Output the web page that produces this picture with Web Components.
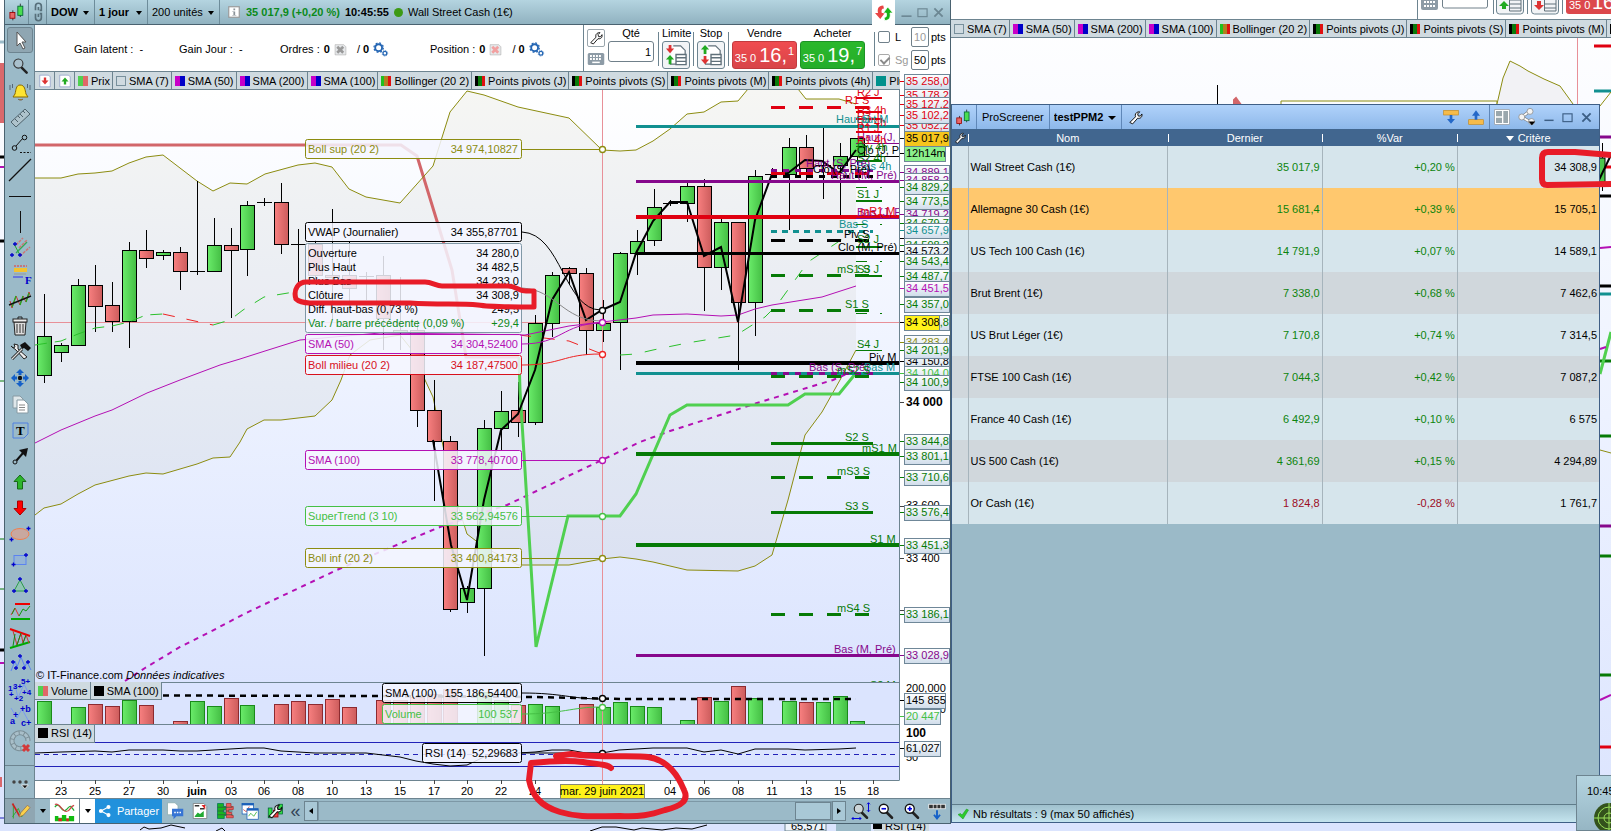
<!DOCTYPE html>
<html lang="fr">
<head>
<meta charset="utf-8">
<title>DOW 1 jour - ProScreener</title>
<style>
html,body{margin:0;height:100%}
body{font:11px/14px "Liberation Sans",Arial,sans-serif;color:#000;background:#dfe6ff;overflow:hidden}
</style>
</head>
<body>
<trading-desktop></trading-desktop>
<script>
const base='*{box-sizing:border-box}button,input,select{font:inherit;color:inherit;margin:0;padding:0;border:0;background:none;border-radius:0}button{display:inline-flex;align-items:center;justify-content:center}';
function define(name,render){
  customElements.define(name,class extends HTMLElement{
    constructor(){super();this.attachShadow({mode:'open'});}
    connectedCallback(){this.shadowRoot.innerHTML=render(this);}
  });
}
const plus=(x,y)=>`<path d="M${x-2} ${y}h4M${x} ${y-2}v4" stroke="#00c" stroke-width="1.3"/>`;
const wrench='<path d="M4 19l8-8c-1-3 0-6 4-7l2 0-3 3 1 3 3 0 2-3c1 4-2 7-6 6l-7 8z" fill="#fff" stroke="#111" stroke-width="1.4" stroke-linejoin="round"/>';
const lens='<path d="M13 14l7 7" stroke="#222" stroke-width="3.4" stroke-linecap="round"/><circle cx="9" cy="9" r="6"';
const ICONS={
candles:'<path d="M7 10v12M16 2v16" stroke="#222"/><rect x="3.5" y="12.5" width="6" height="7" fill="#e86868" stroke="#900"/><rect x="13" y="5" width="6" height="11" fill="#4ade50" stroke="#063"/>',
chain:'<g fill="none" stroke="#566f7a" stroke-width="2"><path d="M9 10V5a3.5 3.5 0 0 1 7 0v5h-2M9 14v5a3.5 3.5 0 0 0 7 0v-5h-2M12.5 6v4M12.5 14v4"/></g>',
info:'<rect x="3" y="3" width="18" height="18" fill="#fff" stroke="#999" stroke-width="2"/><path d="M11 6h3v3h-3zM9 11h5v6h2v1H9v-1h2v-5H9z" fill="#8a9298"/>',
cursor:'<path d="M9 4v14l3-3 3 6 2-1-3-6h4z" fill="#fff" stroke="#555"/>',
search:'<path d="M14 14l6 6" stroke="#222" stroke-width="3" stroke-linecap="round"/><circle cx="10" cy="9" r="5.5" fill="#a9c0cc" stroke="#333" stroke-width="1.3"/>',
bell:'<path d="M12 5c-4 0-4 5-5 9l-2 3h15l-2-3c-1-4-1-9-6-9z" fill="#fde432" stroke="#8a6a00"/><path d="M10 19a3 2.5 0 0 0 5 0" fill="#b88a00" stroke="#765"/><path d="M2 5v5M4.5 4v4M22 5v5M19.5 4v4" stroke="#567"/>',
ruler:'<path d="M3 16L17 3l5 5L8 21z" fill="#aec3cc" stroke="#4e626c"/><path d="M7 13l3 3M10 10l2 2M12 8l3 3M15 5l2 2" stroke="#4e626c"/>',
segment:'<path d="M8 14l7-8" stroke="#111"/><circle cx="6.5" cy="16" r="2.3" fill="none" stroke="#111"/><circle cx="16.5" cy="5.5" r="2.3" fill="none" stroke="#111"/><path d="M12 20.5h11" stroke="#111" stroke-dasharray="2 1.5"/>',
line:'<path d="M1 23L23 1" stroke="#111" stroke-width="1.2"/>',
hline:'<path d="M1 12.5h22" stroke="#111"/>',vline:'<path d="M12.5 1v22" stroke="#111"/>',
fork:'<g fill="none"><path d="M6 8L12 19" stroke="#2a2"/><path d="M8 17L19 6" stroke="#3a5" stroke-width="1.5"/><path d="M8 9l7-7M11 12l8-8M12 20L22 11" stroke="#c77" stroke-width="1.5" stroke-dasharray="3 1"/></g>'+plus(7,8)+plus(4,19)+plus(12,19),
fib:'<path d="M6 4h13" stroke="#e33" stroke-dasharray="2 1"/><path d="M6 7h13M6 9h13" stroke="#f2c230" stroke-width="2"/><path d="M6 12h12" stroke="#999"/><path d="M5 15h10" stroke="#33e"/><text x="17" y="22" font-family="Liberation Serif,serif" font-weight="700" font-size="11" fill="#00c">F</text>',
wave:'<path d="M2 13l2 7 4-12 4 9 3-9 3 6 3-10 1 3" fill="none" stroke="#c33"/><path d="M4 19l4-11M12 17l3-9M18 14l3-9" stroke="#2a2" stroke-width="1.3"/><path d="M1 17L23 8" stroke="#111" stroke-width="1.5"/>',
trash:'<path d="M6 8h12l-1 13H7z" fill="#ddd" stroke="#222"/><path d="M9 10v9M12 10v9M15 10v9" stroke="#333"/><rect x="5" y="5" width="14" height="3" fill="#eee" stroke="#222"/><path d="M10 5V3h4v2" fill="none" stroke="#222"/>',
tools:'<path d="M3 6l5 4 8 9 3-2-9-8 0-4-4-1 1 3-2 1z" fill="#eee" stroke="#222"/><path d="M4 19L14 9" stroke="#222" stroke-width="3"/><path d="M4 19L14 9" stroke="#ddd" stroke-width="1.3"/><path d="M12 5l5-3 6 6-3 3-4-3-2 1z" fill="#111"/>',
move:'<g fill="#1560c8"><path d="M12 3l4 4h-2.5v2h-3V7H8zM12 21l4-4h-2.5v-2h-3v2H8zM3 12l4-4v2.5h2v3H7V16zM21 12l-4-4v2.5h-2v3h2V16z"/></g><circle cx="12" cy="12" r="2.2" fill="#111"/>',
copy:'<g fill="#dfe7ea" stroke="#879aa3"><path d="M5 4h7l3 3v9H5z"/><path d="M9 8h7l4 4v9H9z" fill="#fff"/></g><path d="M11 13h6M11 15.5h6M11 18h6" stroke="#888"/>',
text:'<path d="M5 5h15v11l-4 4H5z" fill="none" stroke="#5080e0"/><text x="8" y="17" font-family="Liberation Serif,serif" font-weight="700" font-size="13">T</text>',
arrow:'<circle cx="7" cy="18" r="2" fill="none" stroke="#111"/><path d="M8.5 16.5L15 9" stroke="#111" stroke-width="2"/><path d="M11 6l9-2-2 9z" fill="#111"/>',
up:'<path d="M12 5l6 6.5h-3.500V19h-5v-7.500H6z" fill="#2db52d" stroke="#176a17"/>',
down:'<path d="M12 19l6-6.500h-3.500V5h-5v7.500H6z" fill="#f00" stroke="#a00"/>',
ellipse:'<ellipse cx="12" cy="12" rx="9" ry="5.5" fill="#c8a8a0" stroke="#f08050"/>'+plus(20.5,6.5)+plus(3.5,17.5),
rect:'<rect x="6" y="7.5" width="12" height="9" fill="#94b4d6" stroke="#5b83f0"/>'+plus(18,7)+plus(5.5,16.5),
tri:'<path d="M12 6l6 11H6z" fill="#8fc5b4" stroke="#2a9a4a"/>'+plus(12,5)+plus(6,17)+plus(18,17),
ch1:'<path d="M7 4h15" stroke="#e00" stroke-width="2"/><path d="M3 19h19" stroke="#0a0" stroke-width="2"/><path d="M3 15l4-7 4 8" fill="none" stroke="#d33"/><path d="M4 14l3-6M11 16l4-7 3 2 4-5" fill="none" stroke="#191"/>',
ch2:'<path d="M2 3l20 7" stroke="#e00" stroke-width="2"/><path d="M2 22l20-6" stroke="#0a0" stroke-width="2"/><path d="M5 5l4 14 4-12 2 10 3-8 3 8" fill="none" stroke="#c33"/><path d="M5 20l2-12M9 19l4-12M15 17l3-8" stroke="#181"/>',
zigzag:'<path d="M3 19l4-10 2 6 4-10 4 10 2-5 4 8" fill="none" stroke="#5b83f0"/>'+plus(5,10)+plus(8,16)+plus(12,4)+plus(16,16)+plus(20,10),
elliott:'<path d="M2 18l5-11 3 13L16 6l4 8" fill="none" stroke="#7a9af0"/><g font-size="8" font-weight="700" fill="#00c"><text x="0" y="13">1</text><text x="5" y="11">3+</text><text x="13" y="6">5+</text><text x="1" y="19">+</text><text x="6" y="23">+2</text><text x="14" y="17">+4</text></g>',
abc:'<path d="M3 4l6 10L14 5l7 13" fill="none" stroke="#7a9af0"/><g font-size="9" font-weight="700" fill="#00c"><text x="2" y="20">a</text><text x="5" y="14">+</text><text x="12" y="8">+b</text><text x="13" y="22">c+</text></g>',
circle:'<path d="M17 17a8 8 0 1 1 3-6" fill="none" stroke="#7b8f98" stroke-width="5"/><path d="M17 17a8 8 0 1 1 3-6" fill="none" stroke="#a9bfc9" stroke-width="3" stroke-dasharray="4 1"/><path d="M15 15l6 6M21 15l-6 6" stroke="#d43a3a" stroke-width="3"/>',
dots:'<circle cx="4" cy="8" r="2.3" fill="#444"/><circle cx="12" cy="8" r="2.3" fill="#444"/><circle cx="20" cy="8" r="2.3" fill="#444"/><path d="M14 12h9l-4.500 5z" fill="#111" stroke="#fff"/>',
wrench,
keyboard:'<rect x="1" y="4" width="22" height="16" rx="2" fill="#8d9ba6"/><path d="M4 8h16M4 12h16" stroke="#fff" stroke-width="2.5" stroke-dasharray="2.5 1.5"/><path d="M7 16.5h10" stroke="#fff" stroke-width="2"/>',
cross:'<path d="M2 3h16l4 4v15H2z" fill="#e6e8ea" stroke="#aaa"/><path d="M6 7l11 11M17 7L6 18" stroke="currentColor" stroke-width="5"/>',
gears:'<circle cx="9" cy="9" r="5.5" fill="none" stroke="#2466b4" stroke-width="3"/><circle cx="9" cy="9" r="7.5" fill="none" stroke="#2466b4" stroke-width="2" stroke-dasharray="3 2.9"/><circle cx="19" cy="18" r="3" fill="none" stroke="#2466b4" stroke-width="2"/><circle cx="19" cy="18" r="4.5" fill="none" stroke="#2466b4" stroke-width="1" stroke-dasharray="2 1.5"/>',
limit:'<path d="M9 2h8l5 5v15H6v-6" fill="#fff" stroke="#60707a" stroke-width="1.3"/><path d="M12 11.5h11v11H12z" fill="#fff" stroke="#60707a" stroke-width="1.5"/><path d="M12 15h11M12 19h11" stroke="#60707a" stroke-width="1.5"/><path d="M4 1h3v4h3L5.500 10 1 5h3z" fill="#d33"/><path d="M4 22h3v-5h3l-4.500-5L1 17h3z" fill="#2a2"/>',
stop:'<path d="M9 2h8l5 5v15H6v-6" fill="#fff" stroke="#60707a" stroke-width="1.3"/><path d="M12 11.5h11v11H12z" fill="#fff" stroke="#60707a" stroke-width="1.5"/><path d="M12 15h11M12 19h11" stroke="#60707a" stroke-width="1.5"/><path d="M4 11h3V6h3L5.500 1 1 6h3z" fill="#2a2"/><path d="M4 13h3v4h3l-4.500 5L1 17h3z" fill="#d33"/>',
refresh:'<path d="M11 2C4 2 3 7 4 12H0l7 8 6-8H9c-1-4 0-6 3-6z" fill="#e84545"/><path d="M13 22c7 0 8-5 7-10h4l-7-8-6 8h4c1 4 0 6-3 6z" fill="#17b317" stroke="#fff"/>',
min:'<path d="M1 20h22" stroke="currentColor" stroke-width="3.5"/>',max:'<rect x="2" y="4" width="20" height="17" fill="none" stroke="currentColor" stroke-width="2.5"/>',close:'<path d="M3 3l18 18M21 3L3 21" stroke="currentColor" stroke-width="4"/>',
tab_down:'<path d="M3 2h15l3 3v17H3z" fill="#fff" stroke="#78b"/><path d="M10 6h4v5h4l-6 7-6-7h4z" fill="#d33"/>',
tab_up:'<path d="M3 2h15l3 3v17H3z" fill="#fff" stroke="#78b"/><path d="M10 18h4v-5h4l-6-7-6 7h4z" fill="#2a2"/>',
pencil:'<path d="M4 4v17M3 19l7-10 4 10 6-8" stroke="#2a2" fill="none"/><path d="M3 3l9 16" stroke="#c22" stroke-width="2"/><path d="M21 5l-8 9-2 5 5-2 8-9z" fill="#fbd04a" stroke="#975"/>',
indic:'<path d="M1 7c5-8 8 8 13 3s4-6 9 1" fill="none" stroke="#2a3" stroke-width="1.4"/><path d="M1 4c5-3 8 8 13 8s4-6 9-7" fill="none" stroke="#c44" stroke-width="1.4"/><path d="M1 23v-6h4v2h4v-3h5v4h3v-3h6v6z" fill="#1b1"/><path d="M5 23v-3h4v3M14 23v-3h3v3" fill="#d22"/>',
share:'<g fill="currentColor"><circle cx="5" cy="12" r="3.5"/><circle cx="18" cy="5" r="3.5"/><circle cx="18" cy="19" r="3.5"/></g><path d="M18 5L5 12l13 7" fill="none" stroke="currentColor" stroke-width="1.8"/>',
chat:'<path d="M2 1h10l4 4v12H2z" fill="#fff" stroke="#8aa"/><path d="M8 9h15v10h-9l-4 4v-4H8z" fill="#3674d4"/><path d="M11 14h2M14.5 14h2M18 14h2" stroke="#fff" stroke-width="2"/>',
report:'<path d="M3 2h14l4 4v16H3z" fill="#fff" stroke="#777"/><path d="M5 5h6M12 9h6" stroke="#333" stroke-width="2"/><path d="M14 4h5v6z" fill="#d22"/><path d="M5 19l4-5 3 2 5-4v8H5z" fill="#2a3"/>',
book:'<path d="M2 2h8v4h3v4h-3v4h3v4h-2v4H2z" fill="#19b51f" stroke="#075"/><path d="M14 2h6v4h3v4h-6v4h4v4h2v3h-9z" fill="#f05a5a" stroke="#a33"/><path d="M2 7h20M2 12h20M2 17h20" stroke="#354"/>',
windows:'<rect x="1.5" y="2" width="15" height="14" fill="#fff" stroke="#1a60b8"/><path d="M1 3h16" stroke="#1a60b8" stroke-width="3"/><path d="M3 10l4 3 4-7" stroke="#c33" fill="none"/><rect x="8" y="9" width="15" height="14" fill="#fff" stroke="#1a60b8"/><path d="M8 10h15" stroke="#1a60b8" stroke-width="3"/><path d="M10 19l3-4 4 4 4-6" stroke="#2a2" fill="none"/>',
candletool:'<rect x="3" y="8" width="5" height="13" fill="#3d4" stroke="#063"/><rect x="17" y="3" width="5" height="13" fill="#3d4" stroke="#063"/><rect x="10" y="11" width="6" height="9" fill="#e44" stroke="#900"/>'+wrench,
zfit:lens+' fill="#ccd5d8" stroke="#222" stroke-width="1.5"/><path d="M22 1v12M20 3l2-2 2 2M20 11l2 2 2-2M0 22h12M2 20l-2 2 2 2M10 20l2 2-2 2" stroke="#00d" fill="none" stroke-width="1.3"/>',
zout:lens+' fill="#fff" stroke="#111" stroke-width="1.8"/><path d="M6 9h6" stroke="#00d" stroke-width="2.2"/>',
zin:lens+' fill="#fff" stroke="#111" stroke-width="1.8"/><path d="M6 9h6M9 6v6" stroke="#00d" stroke-width="2.2"/>',
dock:'<rect x="1" y="3" width="22" height="6" fill="#333" stroke="#fff"/><path d="M7 3v6M12 3v6M17 3v6" stroke="#fff"/><path d="M12 11v10M8 17l4 5 4-5" stroke="#1560c8" stroke-width="2.5" fill="none"/>',
odown:'<rect x="1" y="2" width="22" height="7" fill="#f6bb4a" stroke="#c58a20"/><path d="M10 9h4v6h4l-6 7-6-7h4z" fill="#2468c8"/>',
oup:'<rect x="1" y="16" width="22" height="7" fill="#f6bb4a" stroke="#c58a20"/><path d="M10 16h4v-6h4l-6-8-6 8h4z" fill="#2468c8"/>',
layout:'<rect x="1" y="1" width="22" height="22" fill="#fff" stroke="#999"/><path d="M3 3h9v8H3zM3 13h9v8H3zM14 3h7v18h-7z" fill="#9aa7ad"/>',
sharemenu:'<path d="M16 4L5 12l12 7" fill="none" stroke="#777" stroke-width="4"/><g fill="#f4f4f4" stroke="#888"><path d="M16 4L5 12l12 7" fill="none" stroke="#fff" stroke-width="2.5"/><circle cx="5" cy="12" r="4"/><circle cx="16" cy="4.5" r="4"/><circle cx="18" cy="18" r="4"/></g><path d="M14 18h9l-4.500 5z" fill="#000"/>',
check:'<path d="M2 13l5-2 3 3L19 2l4 2-11 18z" fill="#2ccc2c" stroke="#189018"/>',
};
customElements.define('app-icon',class extends HTMLElement{
  constructor(){super();this.attachShadow({mode:'open'});}
  connectedCallback(){
    const s=+this.getAttribute('size')||24;
    this.shadowRoot.innerHTML=`<style>:host{display:inline-block;width:${s}px;height:${s}px;flex:none}svg{display:block;overflow:visible;font-family:"Liberation Sans",Arial,sans-serif}</style><svg width="${s}" height="${s}" viewBox="0 0 24 24" aria-hidden="true">${ICONS[this.getAttribute('name')]||''}</svg>`;
  }
});

/* Coloured swatch and series name */
define('legend-chip',()=>`<style>${base}
:host{display:inline-flex;align-items:center;gap:3px;height:17px;padding:0 2px 0 3px;border-right:1px solid #6d8490;background:#cfdae0;white-space:nowrap;flex:none}
i{width:10px;height:10px;background:var(--swatch,transparent)}
:host([hollow]) i{border:1px solid #78909c}</style><i></i><slot></slot>`);
define('legend-strip',el=>{
  const mb='linear-gradient(90deg,#c800c8 50%,#0000c8 50%)',pp='linear-gradient(90deg,#000 33%,#0a7a0a 33% 66%,#e01010 66%)';
  const chips=[['Prix','linear-gradient(90deg,#50d050 50%,#e06868 50%)'],['SMA (7)',''],['SMA (50)',mb],['SMA (200)',mb],['SMA (100)',mb],['Bollinger (20 2)','linear-gradient(90deg,#20c020 33%,#b08020 33% 66%,#e01010 66%)'],['Points pivots (J)',pp],['Points pivots (S)',pp],['Points pivots (M)',pp],['Points pivots (4h)',pp],['Plus Haut','#00918c']];
  const from=+el.getAttribute('from')||0;
  return `<style>${base}:host{display:flex;overflow:hidden;border-top:1px solid #6d8490;border-bottom:1px solid #6d8490;background:#cfdae0}
  button{width:20px;border-right:1px solid #6d8490;flex:none}</style>${from?'':'<button aria-label="Réduire"><app-icon name="tab_down" size="14"></app-icon></button><button aria-label="Agrandir"><app-icon name="tab_up" size="14"></app-icon></button>'}`+
  chips.slice(from).map(c=>`<legend-chip ${c[1]?`style="--swatch:${c[1]}"`:'hollow'}>${c[0]}</legend-chip>`).join('');
});

define('tool-rail',()=>{
  const t='cursor search bell ruler segment line hline vline fork fib wave trash tools move copy text arrow up down ellipse rect tri ch1 ch2 zigzag elliott abc circle'.split(' ');
  return `<style>${base}:host{display:flex;flex-direction:column;align-items:center;width:30px;padding-top:2px;background:#9bbac8;border-right:1px solid #6d8490}
  button{width:26px;height:26px;border-radius:3px}button.on{background:#8fa6b2;border:1px solid #6d8490}
  .more{margin-top:10px;border-top:1px solid #6d8490;width:100%;flex:1;border-radius:0;padding-top:6px}</style>`+
  t.map((n,i)=>`<button class="${i?'':'on'}" aria-label="${n}"><app-icon name="${n}" size="${i===1?20:24}"></app-icon></button>`).join('')+
  '<button class="more" aria-label="more"><app-icon name="dots" size="18"></app-icon></button>';
});

define('title-bar',()=>`<style>${base}
:host{display:flex;height:25px;align-items:stretch;background:linear-gradient(#b4d4e0,#90b2c0);border-bottom:1px solid #4a6270;white-space:nowrap}
:host>:not(style){display:flex;align-items:center;flex:none}
.s{border-right:1px solid #6d8c9a;justify-content:center}
label{position:relative;padding-left:4px;border-right:1px solid #6d8c9a}
label::after{content:"";border:3px solid transparent;border-top:4px solid #000;border-bottom:0;position:absolute;right:5px;top:11px}
select{appearance:none;font-size:11px;width:100%;outline:0}
.g{color:#0b8a1a;font-weight:700;padding:0 5px}:host>.dot{width:9px;height:9px;border-radius:50%;background:#3d9a14;align-self:center;margin:0 5px}
:host>.r{margin-left:auto;background:#fff;width:23px;justify-content:center;height:25px}
.w{color:#6c8793;width:55px;gap:5px;padding-left:6px}</style>
<span class="s" style="width:24px"><app-icon name="candles" size="20"></app-icon></span>
<span class="s" style="width:18px"><app-icon name="chain" size="20"></app-icon></span>
<label style="width:48px"><select aria-label="Valeur" style="font-weight:700"><option>DOW</option></select></label>
<label style="width:53px"><select aria-label="Période" style="font-weight:700"><option>1 jour</option></select></label>
<label style="width:72px"><select aria-label="Unités"><option>200 unités</option></select></label>
<span style="padding-left:7px"><app-icon name="info" size="14"></app-icon></span>
<span class="g">35 017,9 (+0,20 %)</span><b>10:45:55</b><i class="dot"></i><span>Wall Street Cash (1€)</span>
<span class="r"><app-icon name="refresh" size="18"></app-icon></span>
<span class="w"><button aria-label="Réduire"><app-icon name="min" size="11"></app-icon></button><button aria-label="Agrandir"><app-icon name="max" size="11"></app-icon></button><button aria-label="Fermer"><app-icon name="close" size="11"></app-icon></button></span>`);

define('order-bar',()=>`<style>${base}
:host{display:flex;height:47px;background:#fff;align-items:stretch}
.pos{flex:1;display:flex;align-items:center;padding-left:39px;padding-top:1px;min-width:0}
.pos>span{display:flex;align-items:center;gap:4px;white-space:nowrap;flex:none}
.ticket{display:grid;grid-template-columns:21px 54px 35px 35px 68px 78px 72px;padding-left:3px;border-left:1px solid #6d8490;flex:none}
.ticket>div{display:flex;flex-direction:column;align-items:flex-start;position:relative}
.col{padding-top:1px}.col>span{line-height:14px;margin-bottom:1px;white-space:nowrap;text-align:center;min-width:100%}
.sep::before{content:"";position:absolute;left:-4px;top:7px;height:34px;border-left:1px solid #6d8490}
.first{padding-top:4px;gap:3px}.first button:first-child{border:1px solid #9aa6ad;border-radius:2px;width:18px;height:18px}
input[type=text]{border:1px solid #70808a;border-radius:3px;text-align:right;background:#fff}
.q{width:46px;height:21px;padding-right:2px}.c46>span{min-width:46px}.c28>span{min-width:28px}.c65>span{min-width:65px}
.b{width:28px;height:28px;border:1px solid #6d8490;border-radius:3px;background:#f2f4f6}
.p{width:65px;height:28px;border-radius:3px;color:#fff;display:flex;align-items:baseline;justify-content:center;font-size:11px;background:linear-gradient(#f04c50,#d84448);border:1px solid #c23b3f;padding:0;line-height:26px}
.p.buy{background:linear-gradient(#2bb82b,#24ad2b);border-color:#1d9226}
.p b{font-weight:400;font-size:20px;line-height:26px;margin-left:3px}.p sup{font-size:11px;align-self:flex-start;line-height:18px;margin-left:1px;vertical-align:baseline}
.ticket>.o{display:grid;grid-template-columns:31px 18px 1fr;column-gap:2px;align-items:center;padding:1px 0}
.o label{display:flex;align-items:center;gap:5px}.o input[type=text]{width:18px;height:20px;text-align:center;border-radius:2px}
.o input[type=checkbox]{appearance:none;width:12px;height:12px;border:1px solid #70808a;border-radius:2px;background:#fff;position:relative;flex:none}
.o input:checked{border-color:#aaa}.o input:checked::after{content:"";position:absolute;left:3px;top:0;width:4px;height:7px;border:solid #8a8a8a;border-width:0 2px 2px 0;transform:rotate(45deg)}
.dim{color:#999}</style>
<div class="pos"><span style="width:105px">Gain latent :&nbsp; -</span><span style="width:101px">Gain Jour :&nbsp; -</span>
<span style="width:150px">Ordres : <b>0</b><app-icon name="cross" size="13" style="color:#999"></app-icon><span>&nbsp; / <b>0</b></span><app-icon name="gears" size="15"></app-icon></span>
<span>Position : <b>0</b><app-icon name="cross" size="13" style="color:#f2a0a0"></app-icon><span>&nbsp; / <b>0</b></span><app-icon name="gears" size="15"></app-icon></span></div>
<div class="ticket"><div class="first"><button aria-label="Réglages"><app-icon name="wrench" size="16"></app-icon></button><button aria-label="Clavier"><app-icon name="keyboard" size="18"></app-icon></button></div>
<div class="col c46"><span>Qté</span><input class="q" type="text" aria-label="Quantité" value="1"></div>
<div class="col c28 sep"><span>Limite</span><button class="b" aria-label="Limite"><app-icon name="limit" size="22"></app-icon></button></div>
<div class="col c28 sep"><span>Stop</span><button class="b" aria-label="Stop"><app-icon name="stop" size="22"></app-icon></button></div>
<div class="col c65 sep"><span>Vendre</span><button class="p"><span>35 0</span><b>16,</b><sup>1</sup></button></div>
<div class="col c65"><span>Acheter</span><button class="p buy"><span>35 0</span><b>19,</b><sup>7</sup></button></div>
<div class="o sep"><label><input type="checkbox">L</label><input type="text" class="dim" value="10" aria-label="Limite pts"><span>pts</span>
<label class="dim"><input type="checkbox" checked>Sg</label><input type="text" value="50" aria-label="Stop pts"><span>pts</span></div></div>`);

/* Price, volume and RSI panes share one horizontal scale: bar i is centred on X(i) */
const X=i=>44.4+16.92*i;
const BARS=[[0,'g',336,375,294,383],[1,'g',345,352,343,362],[2,'g',285,345,279,346],[3,'r',285,306,265,332],[4,'r',305,321,282,332],[5,'g',250,321,242,348],[6,'r',250,258,230,268],[7,'g',252,255,250,260],[8,'r',252,271,247,290],[9,'g',271,271,181,275],[10,'g',245,271,218,271],[11,'r',245,250,228,318],[12,'g',205,249,201,276],[13,'g',202,202,198,206],[14,'r',202,244,183,254],[15,'g',244,244,229,285],[16,'r',244,275,240,280],[17,'r',275,277,209,320],[18,'r',275,288,242,310],[19,'g',276,276,272,300],[20,'r',275,318,256,350],[21,'g',330,332,277,350],[22,'r',330,410,320,427],[23,'r',410,441,380,501],[24,'r',441,609,436,612],[25,'g',588,602,586,613],[26,'g',428,588,420,656],[27,'g',411,428,391,450],[28,'r',410,422,382,437],[29,'g',323,422,315,425],[30,'g',275,323,272,337],[31,'r',268,273,267,285],[32,'r',273,330,268,355],[33,'g',323,330,300,342],[34,'g',253,322,252,370],[35,'g',241,253,230,275],[36,'g',207,240,189,246],[37,'g',203,203,200,206],[38,'g',186,203,183,222],[39,'r',186,267,179,311],[40,'g',222,267,219,290],[41,'r',222,302,222,370],[42,'g',176,302,170,336],[43,'g',174,174,168,178],[44,'g',147,174,138,230],[45,'r',147,168,135,180],[46,'g',165,165,128,199],[47,'g',156,165,143,215],[48,'g',138,156,138,165]];
const VOL={0:'g701',2:'g707',3:'r704',4:'r706',5:'g700',6:'r705',8:'r721',9:'g701',10:'g706',11:'r698',12:'g705',14:'r704',15:'r701',16:'r704',17:'r699',18:'r707',20:'r700',21:'r700',22:'r697',23:'r694',24:'r689',26:'g692',27:'g700',28:'r705',29:'g704',30:'g706',32:'r704',33:'g707',34:'g702',35:'g706',36:'g707',38:'g720',39:'r697',40:'g701',41:'r686',42:'g698',44:'g701',45:'r702',46:'g702',47:'g696',48:'g721'};
const up='35,178 61,178 78,174 95,173 112,171 129,163 146,157 163,155 180,168 197,181 213,191 230,183 247,184 265,174 298,165 315,163 332,167 349,189 366,197 400,203 433,166 450,112 467,91 484,95 518,107 569,118 602,150 620,151 636,150 653,141 670,129 687,114 704,112 721,102 738,101 748,89 798,89 806,99 839,99 856,104';
const lo='35,515 44,508 61,504 78,494 95,485 129,476 146,473 163,474 197,464 213,458 230,457 240,442 247,429 264,420 281,420 315,416 332,400 341,380 350,355 370,340 400,335 416,355 425,380 433,397 450,480 467,534 484,547 518,565 569,565 602,559 620,557 636,559 653,562 687,570 738,571 755,566 772,555 788,500 805,435 822,412 840,380 856,350';
const pl=(p,c,w=1,d='')=>`<polyline points="${p}" fill="none" stroke="${c}" stroke-width="${w}" ${d?`stroke-dasharray="${d}"`:''}/>`;
const hl=(x1,x2,y,c,w=3,d='')=>`<path d="M${x1} ${y}H${x2}" stroke="${c}" stroke-width="${w}" ${d?`stroke-dasharray="${d}"`:''}/>`;
const tx=(x,y,s,c='#000',a='start',o='')=>`<text x="${x}" y="${y}" fill="${c}" text-anchor="${a}" ${o}>${s}</text>`;
const tag=(x,y,w,h,l,r,c)=>`<rect x="${x}.5" y="${y}.5" width="${w}" height="${h}" rx="2" fill="#f4f6ff" fill-opacity=".85" stroke="${c}"/>`+tx(x+3,y+14,l,c)+tx(x+w-3,y+14,r,c,'end');
const G='#067a06',R='#e00010',P='#86088c',T='#119090',O='#8c8c10',M='#b410b4';
function pricePane(){
  let s='';
  s+=`<rect x="35" y="90" width="865" height="592" fill="url(#sky)"/><g clip-path="url(#pane)">`;
  s+=`<polygon points="${up} ${lo.split(' ').reverse().join(' ')}" fill="#888868" fill-opacity=".08"/>`;
  s+=pl('35,145 401,145 417,156 452,270 466,357 519,357','#d2666a',3);
  s+=pl(up,O)+pl(lo,O)+hl(35,899,322.5,'#e89098',1);
  for(const [i,c,a,b,h,l] of BARS){const x=Math.round(X(i));s+=`<path d="M${x}.5 ${h}V${l}" stroke="#000"/>`;
    s+=a===b?hl(x-7,x+8,a+.5,'#000',1):`<rect x="${x-7}.5" y="${a}.5" width="14" height="${b-a}" fill="url(#${c})" stroke="#000"/>`;}
  s+=pl('35,345 61,341 78,334 95,328 112,326 129,322 146,315 163,314','#2bc02b',1,'12 8')+pl('163,314 213,325','#e22',1,'12 12')+pl('213,325 230,320 243,310 264,297 300,291','#2bc02b',1,'12 12')+pl('519,335 569,341 602,354','#e22',1,'12 12')+pl('620,355 636,354 653,350 687,343 730,336 738,334 765,317 777,305 790,287 808,262 832,246 847,236','#2bc02b',1,'12 13');
  s+=pl('35,443 61,430 95,416 112,410 147,393 180,380 220,365 240,359 265,351 300,340 380,333 460,334 525,335 569,326 602,322 636,318 653,315 687,314 721,316 738,315 755,309 772,305 822,297 856,286',M);
  s+=pl('125,681 145,668 180,647 210,632 244,614 339,569 440,527 507,505 602,460 640,442 670,431 714,417 757,403 790,393 833,380 856,370',M,2,'5 5');
  s+=pl('519,357 520,390 536,647 568,516 620,516 636,494 670,415 687,405 788,405 805,394 839,394 856,373','#50d050',3);
  s+=pl('433,440 451,545 467,600 484,500 501,430 518,414 535,370 552,300 569,272 586,320 602,310 620,302 636,253 653,221 670,202 687,202 704,256 721,247 738,322 755,220 772,174 788,173 805,160 822,161 839,173 856,150','#000',2);
  for(const [y,c,w] of [[126.5,T,3],[181.5,P,3],[217,R,4],[253.5,'#000',3],[363,'#000',4],[373.5,T,3],[454,G,4],[545,G,4],[655.5,P,3]])s+=hl(636,899,y,c,w);
  for(const [y,c,d] of [[107.5,R,'14 14'],[170.5,P,'6 6'],[173.5,R,'14 14'],[176.5,'#000','6 6'],[231.5,T,'6 5'],[240.5,'#000','14 14'],[275.5,G,'14 14'],[310.5,G,'14 14'],[373.5,P,'6 6'],[376.5,G,'14 14'],[443.5,G,''],[477.5,G,'14 14'],[512.5,G,''],[614.5,G,'14 14']])s+=hl(771,873,y,c,3,d);
  for(const [y,c,w] of [[98,R,2],[112,R,2],[119,R,2],[132,R,2],[161,G,2],[201,G,2],[247,G,2],[276,G,2]])s+=hl(856,882,y,c,w);
  for(const y of [146.5,187.5,224.5,261.5,313.5])s+=hl(856,882,y,G,1,'11 13');
  s+=hl(856,882,350.5,G,1)+hl(856,899,143.5,P,1)+hl(856,899,156.5,'#000',1)+hl(856,899,218.5,P,1);
  const L=[[857,96,'R2 J',R],[845,104,'R1 S',R],[857,114,'R3 4h',R],[857,120,'R3 J',R],[857,126,'R2 4h',R],[836,123,'Haut S',T],[861,123,'aut M',T],[857,132,'R1 J',R],[857,141,'Haut (J, Pré)',P],[857,144,'R1 4h',R],[857,154,'Clo (J, Pré)','#000'],[857,151,'Piv 4h',G],[857,162,'S2 4h',G],[857,170,'Bas 4h',T],[806,167,'Haut (S, Pré)',P],[813,173,'Clo (S, Pré)','#000'],[831,179,'Haut (M, Pré)',P],[857,198,'S1 J',G],[857,216,'Bas (J, Pré)',P],[860,215,'mR1 M',R],[839,228,'Bas S',T],[844,238,'Piv S','#000'],[857,243,'S2 J',G],[838,251,'Clo (M, Pré)','#000'],[837,273,'mS1 S',G],[857,273,'S3 J',G],[845,308,'S1 S',G],[857,348,'S4 J',G],[869,361,'Piv M','#000'],[809,371,'Bas (S, Pré)',P],[864,371,'Bas M',T],[837,374,'mS2 S',G],[845,441,'S2 S',G],[862,452,'mS1 M',G],[837,475,'mS3 S',G],[845,510,'S3 S',G],[870,543,'S1 M',G],[837,612,'mS4 S',G],[834,653,'Bas (M, Pré)',P],[870,689,'S2 M',G]];
  s+=L.map(l=>tx(...l)).join('')+'</g>';
  s+=tx(36,679,'© IT-Finance.com')+tx(126,679,'Données indicatives','#000','start','font-style="italic"');
  return s;
}
function lowerPanes(){
  let s=`<rect x="35" y="682" width="865" height="98" fill="#dbe4fe"/>`;
  for(const i in VOL){const c=VOL[i][0],y=+VOL[i].slice(1),x=Math.round(X(+i));s+=`<rect x="${x-7}.5" y="${y}.5" width="14" height="${724-y}" fill="url(#${c})" stroke="${c==='g'?'#1a8a1a':'#8c2a30'}"/>`;}
  s+=pl('163,695.5 380,696 536,697 620,699 755,699 856,699','#000',2.5,'6 5');
  s+='<path d="M35 682.5H899M35 724.5H899M35 780.5H899" stroke="#6d8490"/>'+hl(35,899,742.5,'#2222b8',1)+hl(35,899,766.5,'#2222b8',1)+hl(35,899,754.5,'#2222b8',1,'5 4');
  s+=pl('35,753 61,752 95,751 112,752 129,750 163,750 180,751 197,751 230,749 247,748 264,748 281,751 315,753 366,753 400,757 416,761 433,764 450,766 467,765 484,757 501,754 535,752 552,750 569,750 586,753 602,753 619,750 653,748 687,748 704,752 721,750 738,754 755,749 788,749 805,750 839,749 856,748','#000');
  s+=`<rect x="35" y="781" width="915" height="17" fill="#fff"/>`;
  const d={1:'23',3:'25',5:'27',7:'30',9:'juin',11:'03',13:'06',15:'08',17:'10',19:'13',21:'15',23:'17',25:'20',27:'22',29:'24',37:'04',39:'06',41:'08',43:'11',45:'13',47:'15',49:'18'};
  for(const i in d)s+=`<path d="M${Math.round(X(+i))}.5 780v4" stroke="#444"/>`+tx(Math.round(X(+i)),795,d[i],'#000','middle',i==='9'?'font-weight="700"':'');
  return s;
}
function axis(){
  let s='<rect x="900" y="72" width="50" height="709" fill="#fff"/><path d="M899.5 72V780" stroke="#6d8490"/>';
  const box=(y,t,c,f='url(#lab)',w=45)=>`<path d="M900 ${y}.5h4" stroke="${c}"/><rect x="904.5" y="${y-7}.5" width="${w}" height="15" fill="${f}" stroke="#6f8798"/>`+tx(906,y+4,t,c);
  const back=[[95,'35 178,2',R],[104,'35 127,2',R],[125,'35 052,2',R],[172,'34 889,1',P],[180,'34 858,2',P],[214,'34 719,2',P],[223,'34 679,7',G],[238,'34 625,4','#000'],[230,'34 657,9',T],[245,'34 598,2',G],[251,'34 573,2','#000'],[322,'34 304,8',G],[342,'34 283,4',O],[361,'34 150,8','#000'],[373,'34 104,0','#45c045']];
  const front=[[81,'35 258,0',R],[115,'35 102,2',R],[187,'34 829,2',G],[201,'34 773,5',G],[261,'34 543,4',G],[276,'34 487,7',G],[288,'34 451,5',M],[304,'34 357,0',G],[350,'34 201,9',G],[382,'34 100,9',G],[441,'33 844,8',G],[456,'33 801,1',G],[477,'33 710,6',G],[512,'33 576,4',G],[545,'33 451,3',G],[614,'33 186,1',G],[655,'33 028,9',P]];
  s+=tx(906,509,'33 600')+tx(906,562,'33 400')+tx(906,406,'34 000','#000','start','font-weight="700" font-size="12"');
  for(const y of [402,506,558,610])s+=hl(900,904,y+.5,'#444',1);
  s+=back.map(b=>box(...b)).join('')+front.map(b=>box(...b)).join('');
  s+=box(138,'35 017,9','#000','#f6c51c')+box(153,'12h14m','#000','#8cf08c',41)+box(322,'34 308','#000','#fff21a',35);
  s+=tx(906,692,'200,000')+tx(906,713,'100,000')+tx(906,761,'50')+box(716,'20 447','#45c045','url(#lab)',36)+box(700,'145 855','#000','url(#lab)',41)+box(748,'61,027','#000','url(#lab)',36)+tx(906,737,'100','#000','start','font-weight="700" font-size="12"');
  return s;
}
function readouts(){
  const ring=(y,c)=>`<circle cx="602.5" cy="${y}.5" r="3" fill="#fff" stroke="${c}" stroke-width="1.3"/>`;
  const k='#000',S='#45c045';
  let s='<path d="M602.5 90V784" stroke="#e89098"/>';
  s+=hl(522,600,149.5,O,1)+hl(522,600,460.5,M,1)+hl(522,600,516.5,S,1)+hl(522,600,558.5,O,1);
  s+='<g fill="none"><path d="M522 232c40 2 42 78 79 78" stroke="#000"/><path d="M522 288c35 2 40 32 79 33" stroke="#888"/><path d="M522 344c40 0 40-20 79-21" stroke="#b410b4"/><path d="M522 365c40 0 40-11 79-11" stroke="#e22"/><path d="M522 693c40 0 50 6 79 6M522 753h79" stroke="#000"/><path d="M522 714c40 0 50-7 79-7" stroke="#45c045"/></g>';
  s+=tag(305,139,216,19,'Boll sup (20 2)','34 974,10827',O)+tag(305,222,216,19,'VWAP (Journalier)','34 355,87701',k);
  s+='<rect x="305.5" y="243.5" width="216" height="89" rx="2" fill="#f4f6ff" fill-opacity=".85" stroke="#8098a6"/>';
  [['Ouverture','34 280,0'],['Plus Haut','34 482,5'],['Plus Bas','34 233,0'],['Clôture','34 308,9'],['Diff. haut-bas (0,73 %)','249,5'],['Var. / barre précédente (0,09 %)','+29,4']].forEach((r,i)=>{const c=i===5?'#0b8a1a':k;s+=tx(308,257+14*i,r[0],c)+tx(519,257+14*i,r[1],c,'end');});
  s+=tag(305,334,216,19,'SMA (50)','34 304,52400',M)+tag(305,355,216,19,'Boll milieu (20 2)','34 187,47500','#d8101c')+tag(305,450,216,19,'SMA (100)','33 778,40700',M)+tag(305,506,216,19,'SuperTrend (3 10)','33 562,94576',S)+tag(305,548,216,19,'Boll inf (20 2)','33 400,84173',O);
  s+=tag(382,683,139,19,'SMA (100)','155 186,54400',k)+tag(382,704,139,19,'Volume','100 537',S)+tag(422,743,99,19,'RSI (14)','52,29683',k);
  s+=ring(149,O)+ring(310,k)+ring(322,M)+ring(354,'#e22')+ring(460,M)+ring(516,S)+ring(558,O)+ring(698,k)+ring(707,S)+ring(753,k);
  s+='<rect x="560.5" y="784.5" width="84" height="14" fill="#fff21a" stroke="#887"/>'+tx(602,795,'mar. 29 juin 2021','#000','middle');
  return s;
}
define('price-chart',()=>`<style>${base}
:host{display:grid;position:relative;z-index:2;min-width:0;align-items:start}
svg{grid-area:1/1;display:block;width:100%;height:auto;overflow:visible;font:11px "Liberation Sans",Arial,sans-serif}
legend-strip{grid-area:1/1;margin-right:50px;margin-top:-1px;z-index:1}
.tab{position:absolute;left:0;display:flex;border-bottom:1px solid #6d8490}</style>
<svg viewBox="35 72 915 726" role="img" aria-label="Graphique DOW">
<defs><linearGradient id="sky" x2="0" y2="1"><stop offset="0" stop-color="#fff"/><stop offset=".5" stop-color="#edf2ff"/><stop offset="1" stop-color="#dbe4fe"/></linearGradient>
<linearGradient id="g"><stop offset="0" stop-color="#6aec6a"/><stop offset="1" stop-color="#44be44"/></linearGradient>
<linearGradient id="r"><stop offset="0" stop-color="#f88080"/><stop offset="1" stop-color="#cc5c5c"/></linearGradient>
<linearGradient id="lab" x2="0" y2="1"><stop offset="0" stop-color="#fff"/><stop offset="1" stop-color="#cfdcea"/></linearGradient>
<clipPath id="pane"><rect x="35" y="90" width="864" height="592"/></clipPath></defs>
${pricePane()}${lowerPanes()}${axis()}${readouts()}
<g fill="none" stroke="#e81c28" stroke-linecap="round" stroke-linejoin="round"><path stroke-width="5" d="M296 299C293 290 298 281 308 282H425C432 282 436 286 442 286H508C516 286 518 291 526 291H534V307C510 307 490 307 478 305C460 303 440 305 410 303H310C304 303 298 301 296 299"/>
<path stroke-width="6" d="M556 756L571 754C600 758 636 755 648 757C668 760 678 775 684 790C689 800 682 806 665 810C650 815 640 817 620 816C595 816 580 818 560 812C540 806 532 795 529 780L531 763C550 761 570 760 583 762C595 764 607 764 611 768"/></g></svg>
<legend-strip></legend-strip>
<div class="tab" style="top:calc(610/726*100%)"><legend-chip style="--swatch:linear-gradient(90deg,#50d050 50%,#e06868 50%)">Volume</legend-chip><legend-chip style="--swatch:#000">SMA (100)</legend-chip></div>
<div class="tab" style="top:calc(653/726*100%)"><legend-chip style="--swatch:#000">RSI (14)</legend-chip></div>`);

define('chart-toolbar',()=>`<style>${base}
:host{display:flex;align-items:stretch;height:25px;background:#9bbac8;border-top:1px solid #6d8490;position:relative}
button{flex:none;width:25px}.a{width:15px}.a::before,.l::before,.rr::before{content:"";border:3px solid transparent;border-top:4px solid #000;border-bottom:0}
.w{background:#fff}.l,.rr{width:14px;border:1px solid #6d8490;background:#a9c8d6}.l::before{transform:rotate(90deg)}.rr::before{transform:rotate(-90deg)}
.share{width:67px;background:#2191dc;color:#fff;gap:5px}
.track{flex:1;display:flex;justify-content:flex-end;border:1px solid #7d98a6;margin:2px 0}.track i{width:36px;background:#a9c8d6;border:1px solid #6d8490}
.l,.rr{margin:2px 0}.zoom{display:flex;width:104px;padding-left:2px;justify-content:space-around}</style>
<button style="width:30px;background:#8fa6b2" aria-label="Dessin"><app-icon name="pencil" size="20"></app-icon></button><button class="a" aria-label="Menu dessin"></button>
<button class="w" style="width:29px" aria-label="Indicateurs"><app-icon name="indic" size="21"></app-icon></button><button class="a w" style="border-left:1px solid #6d8490;width:16px" aria-label="Menu indicateurs"></button>
<button class="share"><app-icon name="share" size="14"></app-icon>Partager</button>
${['chat','report','book','windows','candletool'].map(n=>`<button aria-label="${n}"><app-icon name="${n}" size="18"></app-icon></button>`).join('')}
<button style="width:17px;font-size:18px;color:#345" aria-label="Replier">«</button>
<button class="l" aria-label="Gauche"></button><div class="track"><i></i></div><button class="rr" aria-label="Droite"></button>
<div class="zoom">${['zfit','zout','zin','dock'].map(n=>`<button aria-label="${n}"><app-icon name="${n}" size="18"></app-icon></button>`).join('')}</div>`);

define('chart-window',()=>`<style>${base}
:host{display:flex;flex-direction:column;border:1px solid #4a6270;border-top:0;background:#9bbac8;min-width:0;position:relative;z-index:1}
.body{display:grid;grid-template-columns:30px minmax(0,1fr);position:relative;z-index:2}</style>
<title-bar></title-bar><div class="body"><tool-rail></tool-rail><div><order-bar></order-bar><price-chart></price-chart></div></div><chart-toolbar></chart-toolbar>`);

define('screener-window',()=>{
  const rows=[['Wall Street Cash (1€)','35 017,9','+0,20 %','34 308,9'],['Allemagne 30 Cash (1€)','15 681,4','+0,39 %','15 705,1'],['US Tech 100 Cash (1€)','14 791,9','+0,07 %','14 589,1'],['Brut Brent (1€)','7 338,0','+0,68 %','7 462,6'],['US Brut Léger (1€)','7 170,8','+0,74 %','7 314,5'],['FTSE 100 Cash (1€)','7 044,3','+0,42 %','7 087,2'],['France 40 Cash (1€)','6 492,9','+0,10 %','6 575'],['US 500 Cash (1€)','4 361,69','+0,15 %','4 294,89'],['Or Cash (1€)','1 824,8','-0,28 %','1 761,7']];
  return `<style>${base}
:host{display:flex;flex-direction:column;background:#9bbac8;border:1px solid #3f5f86;position:relative}
header{display:flex;height:24px;background:linear-gradient(#b0d2fa,#8db8ea);align-items:stretch;flex:none}
header>*{display:flex;align-items:center;border-right:1px solid #5f87b8;padding:0 5px}
label{position:relative}header label{padding:0 4px}label::after{content:"";border:4px solid transparent;border-top:4px solid #000;border-bottom:0;position:absolute;right:5px;top:11px}
select{appearance:none;font-weight:700;font-size:11px;width:63px;outline:0}
header .m{flex:1;gap:9px}header .e{border:0;gap:8px;padding:0 7px 0 4px;color:#3d5f85}
table{width:100%;border-collapse:collapse;table-layout:fixed;flex:none}
th{height:17px;background:#41668f;color:#fff;font-weight:400;padding:0;position:relative}
th+th::before{content:"";position:absolute;left:0;top:5px;height:8px;border-left:1px solid #fff}
th app-icon{display:block;margin:auto}
th i{display:inline-block;border:4px solid transparent;border-top:5px solid #fff;border-bottom:0;margin-right:4px;vertical-align:1px}
td{height:42px;padding:0 2px;border-left:1px solid #a6b4bc;text-align:right;background:#d6e5ec}
td:first-child{border:0}tr:nth-child(even) td{background:#d0d7dc}tbody tr:nth-child(2) td{background:#ffc86e}
td:nth-child(2){text-align:left}.u{color:#0c840c}.d{color:#9c0c24}
footer{margin-top:auto;height:18px;border-top:1px solid #5f7c8a;background:linear-gradient(#9fc0cd,#c4e4ee);display:flex;align-items:center;gap:4px;padding-left:5px;flex:none}
svg{position:absolute;left:calc(100% - 60px);top:44px;overflow:visible}</style>
<header><span style="width:25px;padding:0 2px"><app-icon name="candles" size="19"></app-icon></span><span>ProScreener</span><label><select aria-label="Écran"><option>testPPM2</option></select></label>
<span class="m"><button aria-label="Réglages"><app-icon name="wrench" size="17"></app-icon></button><button style="margin-left:auto" aria-label="Importer"><app-icon name="odown" size="16"></app-icon></button><button aria-label="Exporter"><app-icon name="oup" size="16"></app-icon></button></span>
<span class="e"><button aria-label="Disposition"><app-icon name="layout" size="16"></app-icon></button><button aria-label="Partager"><app-icon name="sharemenu" size="18"></app-icon></button><button aria-label="Réduire"><app-icon name="min" size="10"></app-icon></button><button aria-label="Agrandir"><app-icon name="max" size="11"></app-icon></button><button aria-label="Fermer"><app-icon name="close" size="11"></app-icon></button></span></header>
<table><colgroup><col style="width:16px"><col style="width:31%"><col style="width:24%"><col style="width:21%"><col style="width:22%"></colgroup>
<thead><tr><th><app-icon name="wrench" size="14"></app-icon></th><th>Nom</th><th>Dernier</th><th>%Var</th><th><i></i>Critère</th></tr></thead>
<tbody>${rows.map(r=>{const c=r[2][0]==='-'?'d':'u';return `<tr><td></td><td>${r[0]}</td><td class="${c}">${r[1]}</td><td class="${c}">${r[2]}</td><td>${r[3]}</td></tr>`}).join('')}</tbody></table>
<footer><app-icon name="check" size="12"></app-icon>Nb résultats : 9 (max 50 affichés)</footer>
<svg width="76" height="38" aria-hidden="true"><path d="M72 35L8 36Q3 36 3 30V9Q3 3 9 3H36L72 6" fill="none" stroke="#e81c28" stroke-width="6"/></svg>`;
});

/* Windows lying behind the two active ones */
define('backdrop-scene',()=>`<style>:host{display:block;position:absolute;inset:0;overflow:hidden}svg{display:block;width:100%;height:auto;font:11px "Liberation Sans",Arial,sans-serif}</style>
<svg viewBox="0 0 1611 831" aria-hidden="true"><defs><linearGradient id="b" x2="0" y2="1"><stop offset="0" stop-color="#fff"/><stop offset=".5" stop-color="#edf2ff"/><stop offset="1" stop-color="#dbe4fe"/></linearGradient></defs>
<rect width="1611" height="831" fill="url(#b)"/><rect x="951" width="660" height="25" fill="#fff"/><path d="M1417.5 0v25" stroke="#6d8490"/>
<rect x="1421" y="-4" width="17" height="14" rx="2" fill="#8d9ba6"/><path d="M1424 2h12M1424 6h12" stroke="#fff" stroke-width="2" stroke-dasharray="2 1"/>
<rect x="1442.5" y="-5" width="45" height="13" rx="2" fill="#fff" stroke="#70808a"/>
<g fill="#f2f4f6" stroke="#6d8490"><rect x="1496.5" y="-10" width="27" height="24" rx="3"/><rect x="1531.5" y="-10" width="27" height="24" rx="3"/></g>
<path d="M1493.5 0v14M1527.5 0v14M1562.5 0v14" stroke="#6d8490"/><path d="M1509.5 0H1521M1509.5 4H1521M1509.5 8H1521M1509.5 11V0M1509.5 11H1521V0M1544.5 11V0M1544.5 11H1556V0M1544.5 4H1556M1544.5 8H1556" stroke="#60707a" fill="none"/>
<path d="M1504 1l5 5h-3v3h-4V6h-3z" fill="#2a2"/><path d="M1539 10l5-5h-3V1h-4v4h-3z" fill="#d33"/>
<rect x="1566" y="-10" width="60" height="24" rx="3" fill="#dc484c"/><text x="1569" y="9" fill="#fff">35 0</text><text x="1592" y="9" fill="#fff" font-size="20">16</text>
<path d="M1577.5 37V104" stroke="#e89098"/><path d="M1217.5 85v20" stroke="#000"/><path d="M1234 105v-5l2-2 5 7z" fill="#d2666a" stroke="#d2666a" stroke-width="2"/><path d="M1281 105v-4h216v4" fill="none" stroke="#8c8c10"/>
<path d="M1497 104L1503 78 1510 61 1520 66 1528 71 1544 79 1560 86 1568 97 1573 104" fill="#f2f2f5" stroke="#8c8c10"/>
<g stroke-width="3"><path d="M1594 46H1611M1600 167h11" stroke="#e00010"/><path d="M1594 91H1611M1600 294h11" stroke="#119090"/><path d="M1594 137H1611M1600 526h11" stroke="#86088c"/><path d="M1600 196h11M1600 286h11" stroke="#000"/><path d="M1600 361h11M1600 436h11M1600 556h11M1600 675h11" stroke="#067a06"/><path d="M1600 374l11-42" stroke="#50d050"/><path d="M1600 747h11" stroke="#e00010"/></g>
<path d="M1600 106l11-14M1600 450l11 3" stroke="#8c8c10"/><path d="M1600 248l11-1M1600 349l6-2M1600 700l11-5" stroke="#b410b4" stroke-width="2"/><path d="M1602.5 143v48" stroke="#000"/><rect x="1597" y="158" width="8" height="24" fill="#4cc84c" stroke="#000"/><path d="M1598 182l13-27" stroke="#000" stroke-width="2"/>
<path d="M0 42h4" stroke="#9bbac8" stroke-width="3"/><rect y="63" width="4" height="60" fill="#d9686c"/><path d="M0 157h4M0 241h4M0 650h4" stroke="#000" stroke-width="3"/><path d="M0 167h4M0 663h4" stroke="#b410b4" stroke-width="2"/><path d="M0 381h4M0 539h4M0 589h4" stroke="#067a06"/><rect y="777" width="2" height="10" fill="#d9686c"/><path d="M0 818h4" stroke="#2222b8"/>
<rect y="823" width="1611" height="8" fill="#dbe4fe"/><path d="M140 830l4-3 5 2 12-1 10-3 14 3M216 831l6-3 3 3M590 831l12-4h14l18 3 8-2 20 2 14-2 16 1 15-4" fill="none" stroke="#000"/>
<rect x="785" y="815" width="41" height="16" fill="#eef3fa" stroke="#6d8490"/><text x="791" y="830">65,571</text><rect x="836" y="823" width="35" height="8" fill="#9bbac8"/><rect x="874" y="823" width="55" height="8" fill="#cfdae0"/><rect x="873" y="823" width="9" height="6"/><text x="885" y="830">RSI (14)</text></svg>`);

define('clock-gadget',()=>`<style>${base}:host{display:block;width:35px;height:56px;overflow:hidden;background:linear-gradient(#b4d4e0,#96b6c4);border:1px solid #6d8490;border-right:0;padding:8px 0 0 10px;white-space:nowrap}svg{display:block;margin:5px 0 0 7px}</style>
<span>10:45:55</span><svg width="30" height="30" viewBox="0 0 30 30" aria-hidden="true"><circle cx="15" cy="15" r="15" fill="#33521c"/><g fill="none" stroke="#9ae05a"><circle cx="15" cy="15" r="11"/><circle cx="15" cy="15" r="5"/><path d="M15 0v30M0 15h30"/></g></svg>`);

define('trading-desktop',()=>`<style>${base}
:host{display:grid;position:relative;grid-template-columns:4px minmax(0,947fr) minmax(0,660fr);height:100vh;min-height:600px;overflow:hidden}
chart-window{grid-column:2;align-self:start}
.right{grid-column:3;display:flex;flex-direction:column;position:relative;padding-top:19px;min-width:0}
.right legend-strip{margin-bottom:66px;flex:none}
screener-window{flex:1;margin:0 11px 8px 0}
clock-gadget{position:absolute;right:0;bottom:0}</style>
<backdrop-scene></backdrop-scene><chart-window></chart-window>
<div class="right"><legend-strip from="1"></legend-strip><screener-window></screener-window><clock-gadget></clock-gadget></div>`);
</script>
</body>
</html>
